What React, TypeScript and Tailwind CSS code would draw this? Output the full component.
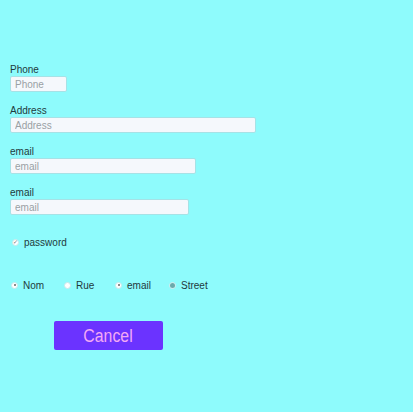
const fields = [
  { label: 'Phone', w: 'w-[57px]', mt: 'mt-0' },
  { label: 'Address', w: 'w-[246px]', mt: 'mt-[13px]' },
  { label: 'email', w: 'w-[186px]', mt: 'mt-[13px]' },
  { label: 'email', w: 'w-[179px]', mt: 'mt-[13px]' },
];

const radios = [
  { label: 'Nom', kind: 'dot', w: 'w-[53px]' },
  { label: 'Rue', kind: 'plain', w: 'w-[51px]' },
  { label: 'email', kind: 'dot', w: 'w-[54px]' },
  { label: 'Street', kind: 'filled', w: 'w-auto' },
];

function Radio({ kind }: { kind: string }) {
  return (
    <span className="w-[7px] h-[7px] rounded-full bg-white border border-[#c8e8ea] flex items-center justify-center">
      {kind === 'dot' && <span className="w-[2px] h-[2px] rounded-full bg-[#666]" />}
      {kind === 'filled' && <span className="w-[5px] h-[5px] rounded-full bg-[#6aa9ab]" />}
    </span>
  );
}

export default function App() {
  return (
    <div className="w-[413px] h-[412px] bg-[#8efbfc] font-['Liberation_Sans',Arial,sans-serif] text-[10px] text-[#1f3a3c] pt-[64px] pl-[10px]">
      {fields.map((f, i) => (
        <div key={i} className={f.mt}>
          <div className="leading-[12px] h-[12px]">{f.label}</div>
          <input
            placeholder={f.label}
            className={`${f.w} h-[16px] block bg-[#f5f8fc] border border-[#a6e2e6] rounded-[2px] px-[4px] text-[10px] placeholder:text-[#9aa0a4] outline-none`}
          />
        </div>
      ))}
      <div className="mt-[21px] flex items-center gap-[5px] pl-[2px] h-[12px]">
        <span className="w-[7px] h-[7px] rounded-full bg-white border border-[#c8e8ea] flex items-center justify-center text-[6px] leading-none text-[#777]">✓</span>
        <span>password</span>
      </div>
      <div className="mt-[31px] flex items-center pl-[1px] h-[12px]">
        {radios.map((r, i) => (
          <div key={i} className={`${r.w} flex items-center gap-[5px]`}>
            <Radio kind={r.kind} />
            <span>{r.label}</span>
          </div>
        ))}
      </div>
      <button className="mt-[30px] ml-[44px] w-[109px] h-[29px] bg-[#6b33ff] rounded-[2px] text-[#f3a9f5] text-[18px] leading-none">
        <span className="inline-block scale-x-[0.88]">Cancel</span>
      </button>
    </div>
  );
}
